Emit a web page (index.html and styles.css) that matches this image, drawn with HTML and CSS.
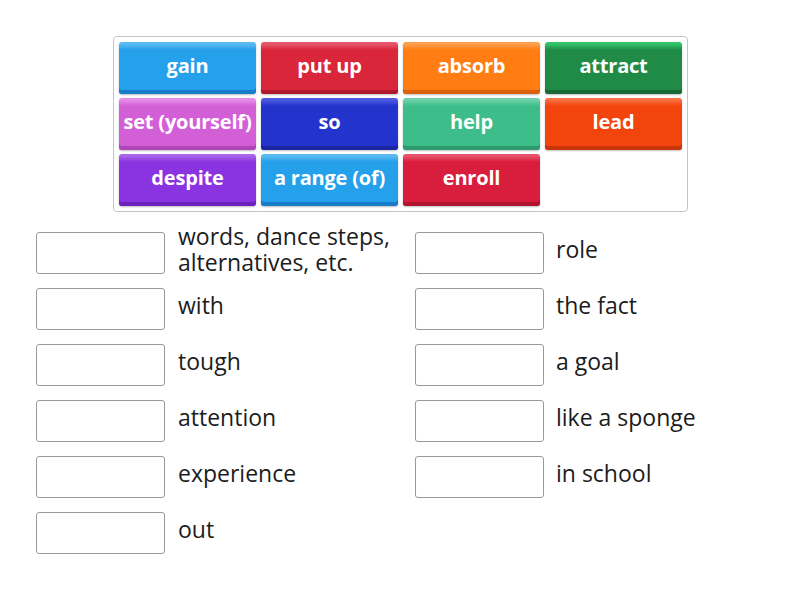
FILE: index.html
```html
<!DOCTYPE html>
<html>
<head>
<meta charset="utf-8">
<link rel="stylesheet" href="styles.css">
</head>
<body>
<div class="bank">
  <div class="tile t-blue">gain</div>
  <div class="tile t-red">put up</div>
  <div class="tile t-orange">absorb</div>
  <div class="tile t-green">attract</div>
  <div class="tile t-pink">set (yourself)</div>
  <div class="tile t-navy">so</div>
  <div class="tile t-mint">help</div>
  <div class="tile t-flame">lead</div>
  <div class="tile t-purple">despite</div>
  <div class="tile t-blue">a range (of)</div>
  <div class="tile t-crimson">enroll</div>
</div>
<div class="pairs">
  <div class="col">
    <div class="item"><div class="slot"></div><div class="label">words, dance steps, alternatives, etc.</div></div>
    <div class="item"><div class="slot"></div><div class="label">with</div></div>
    <div class="item"><div class="slot"></div><div class="label">tough</div></div>
    <div class="item"><div class="slot"></div><div class="label">attention</div></div>
    <div class="item"><div class="slot"></div><div class="label">experience</div></div>
    <div class="item"><div class="slot"></div><div class="label">out</div></div>
  </div>
  <div class="col">
    <div class="item"><div class="slot"></div><div class="label">role</div></div>
    <div class="item"><div class="slot"></div><div class="label">the fact</div></div>
    <div class="item"><div class="slot"></div><div class="label">a goal</div></div>
    <div class="item"><div class="slot"></div><div class="label">like a sponge</div></div>
    <div class="item"><div class="slot"></div><div class="label">in school</div></div>
  </div>
</div>
</body>
</html>
```
FILE: styles.css
```css
html, body {
  margin: 0;
  padding: 0;
  background: #fff;
  font-family: "Open Sans", "Liberation Sans", sans-serif;
}
.bank {
  box-sizing: border-box;
  margin: 36px 0 0 113px;
  width: 575px;
  height: 176px;
  padding: 5px;
  border: 1px solid #c4c4c4;
  border-radius: 4px;
  display: grid;
  grid-template-columns: repeat(4, 137px);
  grid-auto-rows: 52px;
  column-gap: 5px;
  row-gap: 4px;
}
.tile {
  --c: #2a9fe8;
  --l: #5cb8f0;
  --d: #1679c2;
  box-sizing: border-box;
  border-radius: 3px;
  background: linear-gradient(to bottom, var(--l) 0, var(--c) 12%, var(--c) 100%);
  border-top: 2px solid var(--l);
  box-shadow: inset 0 -4px 0 var(--d), 0 1px 2px rgba(0,0,0,0.25);
  color: #fff;
  font-weight: 700;
  font-size: 20px;
  display: flex;
  align-items: center;
  justify-content: center;
  padding-bottom: 8px;
  white-space: nowrap;
  letter-spacing: -0.2px;
}
.t-blue { --c: #25a0ea; --l: #5cbaf2; --d: #167cc8; }
.t-red { --c: #d9263a; --l: #e6576a; --d: #b01a2c; }
.t-orange { --c: #ff7d12; --l: #ff9f50; --d: #d9620a; }
.t-green { --c: #1f8b47; --l: #33c46a; --d: #176a36; }
.t-pink { --c: #d35fd7; --l: #e58ce8; --d: #b046b5; }
.t-navy { --c: #2334cc; --l: #4c5ae0; --d: #1a27a0; }
.t-mint { --c: #3dbd89; --l: #6fd1a9; --d: #2c9a6d; }
.t-flame { --c: #f2440d; --l: #f87043; --d: #c83508; }
.t-purple { --c: #8a33e0; --l: #a866ea; --d: #6c22bb; }
.t-crimson { --c: #d91d3c; --l: #e6526b; --d: #b0142e; }

.pairs {
  display: flex;
  margin: 20px 0 0 36px;
}
.col {
  width: 379px;
  display: flex;
  flex-direction: column;
  gap: 14px;
}
.item {
  height: 42px;
  display: flex;
  align-items: center;
  gap: 13px;
}
.slot {
  box-sizing: border-box;
  flex: none;
  width: 129px;
  height: 42px;
  border: 1px solid #9a9a9a;
  border-radius: 3px;
  background: #fff;
}
.label {
  font-size: 23px;
  line-height: 26px;
  color: #1c1c1c;
  max-width: 225px;
  padding-bottom: 8px;
}
.col + .col .label {
  margin-left: -1px;
}
```
